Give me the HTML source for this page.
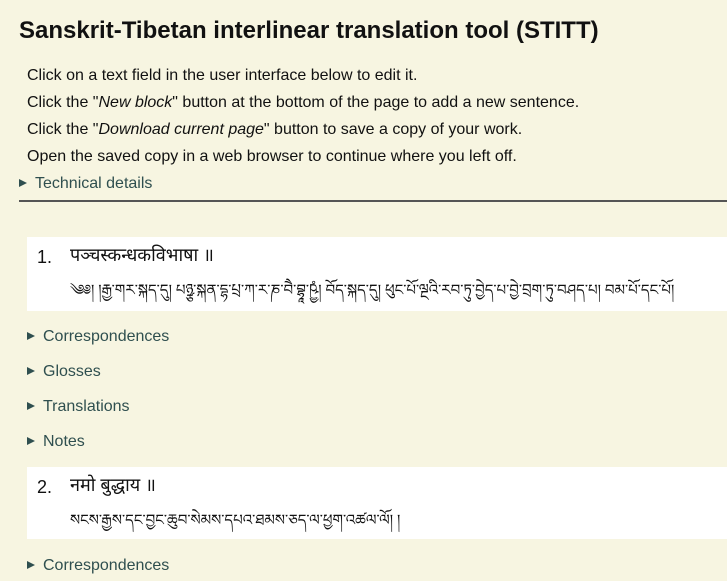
<!DOCTYPE html>
<html><head><meta charset="utf-8"><style>
html,body{margin:0;padding:0;background:#f7f5e1;width:727px;height:581px;overflow:hidden;font-family:"Liberation Sans",sans-serif;color:#111;}
.a{position:absolute;white-space:nowrap;}
h1{position:absolute;left:19px;top:17px;margin:0;font-size:24px;font-weight:bold;color:#111;}
.p{font-size:16px;left:27px;}
.s{font-size:16px;color:#2f4f4f;}
.s:before{content:"";display:inline-block;width:0;height:0;border-left:8px solid #2f4f4f;border-top:4.5px solid transparent;border-bottom:4.5px solid transparent;margin-right:8px;vertical-align:1px;}
.box{position:absolute;left:27px;right:0;background:#fff;}
.skt{font-family:"Liberation Sans","Noto Sans Devanagari","Lohit Devanagari",sans-serif;font-size:18px;}
.tib{font-family:"Noto Serif Tibetan","Jomolhari","Tibetan Machine Uni",serif;font-size:15px;}
</style></head><body>
<h1>Sanskrit-Tibetan interlinear translation tool (STITT)</h1>
<div class="a p" style="top:67px">Click on a text field in the user interface below to edit it.</div>
<div class="a p" style="top:94px">Click the "<i>New block</i>" button at the bottom of the page to add a new sentence.</div>
<div class="a p" style="top:121px">Click the "<i>Download current page</i>" button to save a copy of your work.</div>
<div class="a p" style="top:148px">Open the saved copy in a web browser to continue where you left off.</div>
<div class="a s" style="left:19px;top:175px">Technical details</div>
<div class="a" style="left:19px;right:0;top:200px;height:2px;background:#555;"></div>

<div class="box" style="top:237px;height:74px"></div>
<div class="a" style="left:37px;top:247px;font-size:18px">1.</div>
<div class="a skt" style="left:70px;top:245px">पञ्चस्कन्धकविभाषा ॥</div>
<div class="a tib" style="left:70px;top:274px">༄༅། །རྒྱ་གར་སྐད་དུ། པཉྩ་སྐན་དྷ་པྲ་ཀ་ར་ཎ་བཻ་བྷཱ་ཥྱཾ། བོད་སྐད་དུ། ཕུང་པོ་ལྔའི་རབ་ཏུ་བྱེད་པ་བྱེ་བྲག་ཏུ་བཤད་པ། བམ་པོ་དང་པོ།</div>

<div class="a s" style="left:27px;top:328px">Correspondences</div>
<div class="a s" style="left:27px;top:363px">Glosses</div>
<div class="a s" style="left:27px;top:398px">Translations</div>
<div class="a s" style="left:27px;top:433px">Notes</div>

<div class="box" style="top:467px;height:72px"></div>
<div class="a" style="left:37px;top:477px;font-size:18px">2.</div>
<div class="a skt" style="left:70px;top:475px">नमो बुद्धाय ॥</div>
<div class="a tib" style="left:70px;top:504px">སངས་རྒྱས་དང་བྱང་ཆུབ་སེམས་དཔའ་ཐམས་ཅད་ལ་ཕྱག་འཚལ་ལོ། །</div>

<div class="a s" style="left:27px;top:557px">Correspondences</div>
</body></html>
